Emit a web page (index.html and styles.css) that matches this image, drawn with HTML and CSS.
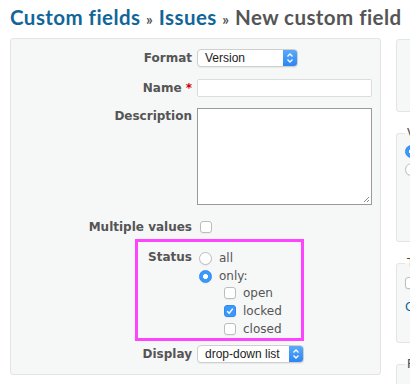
FILE: index.html
```html
<!DOCTYPE html>
<html lang="en">
<head>
  <meta charset="UTF-8">
  <title>New custom field</title>
  <link rel="stylesheet" href="styles.css">
</head>
<body>
  <h2 class="title"><a href="#">Custom fields</a> <span class="sep">&raquo;</span> <a href="#">Issues</a> <span class="sep">&raquo;</span> New custom field</h2>

  <div class="layout">
    <div class="box main-box">
      <div class="row row-format">
        <label class="row-label">Format</label>
        <div class="select select-format">
          <span class="select-value">Version</span>
          <span class="select-arrow">
            <svg width="8" height="12" viewBox="0 0 8 12"><path d="M1.5 4.5 L4 2 L6.5 4.5 M1.5 7.5 L4 10 L6.5 7.5" fill="none" stroke="#fff" stroke-width="1.3"/></svg>
          </span>
        </div>
      </div>

      <div class="row row-name">
        <label class="row-label">Name <span class="required">*</span></label>
        <input class="text-input" type="text">
      </div>

      <div class="row row-desc">
        <label class="row-label">Description</label>
        <div class="textarea">
          <svg class="grip" width="8" height="8" viewBox="0 0 8 8"><path d="M7 2 L2 7 M7 5 L5 7" stroke="#888" stroke-width="1"/></svg>
        </div>
      </div>

      <div class="row row-multiple">
        <label class="row-label">Multiple values</label>
        <span class="cb cb-single"></span>
      </div>

      <div class="highlight">
        <div class="status-row">
          <label class="status-label">Status</label>
          <div class="status-options">
            <div class="opt"><span class="radio"></span>all</div>
            <div class="opt"><span class="radio radio-on"></span>only:</div>
            <div class="sub-opts">
              <div class="opt"><span class="cb"></span>open</div>
              <div class="opt"><span class="cb cb-on"><svg width="10" height="10" viewBox="0 0 10 10"><path d="M2.2 5.2 L4.2 7.2 L7.8 2.6" fill="none" stroke="#fff" stroke-width="1.5"/></svg></span>locked</div>
              <div class="opt"><span class="cb"></span>closed</div>
            </div>
          </div>
        </div>
      </div>

      <div class="row row-display">
        <label class="row-label">Display</label>
        <div class="select select-display">
          <span class="select-value">drop-down list</span>
          <span class="select-arrow">
            <svg width="8" height="12" viewBox="0 0 8 12"><path d="M1.5 4.5 L4 2 L6.5 4.5 M1.5 7.5 L4 10 L6.5 7.5" fill="none" stroke="#fff" stroke-width="1.3"/></svg>
          </span>
        </div>
      </div>
    </div>

    <div class="sidebar">
      <div class="box side-box"></div>

      <fieldset class="side-fieldset fs-visible">
        <legend>Visible</legend>
        <div class="opt"><span class="radio radio-on"></span>to any users</div>
        <div class="opt"><span class="radio"></span>to these roles only:</div>
      </fieldset>

      <fieldset class="side-fieldset fs-trackers">
        <legend>Trackers</legend>
        <div class="opt"><span class="cb"></span>Bug</div>
        <p class="check-links"><a href="#">Check all</a> | <a href="#">Uncheck all</a></p>
      </fieldset>

      <fieldset class="side-fieldset fs-projects">
        <legend>For all projects</legend>
      </fieldset>
    </div>
  </div>
</body>
</html>
```

FILE: styles.css
```css
:root {
  --text: #555;
  --link: #169;
  --box-bg: #f6f7f7;
  --box-border: #e4e4e4;
  --blue: #3b99fc;
  --pink: #ff44ff;
}

* {
  box-sizing: border-box;
}

body {
  margin: 0;
  background: #fff;
  color: var(--text);
  font-family: "DejaVu Sans", Verdana, sans-serif;
  font-size: 12px;
  overflow: hidden;
}

a {
  color: var(--link);
  text-decoration: none;
}

.title {
  height: 31px;
  margin: 0;
  padding: 3px 0 0 10px;
  font-family: Lato, "Open Sans", sans-serif;
  font-size: 20.5px;
  font-weight: 700;
  letter-spacing: 0.45px;
  line-height: 28px;
  color: var(--text);
  white-space: nowrap;
}

.title .sep {
  font-size: 15px;
  line-height: 1;
}

.layout {
  display: flex;
  gap: 15px;
  margin-top: 7px;
  padding-left: 10px;
}

.box {
  background: var(--box-bg);
  border: 1px solid var(--box-border);
  border-radius: 3px;
}

.main-box {
  flex: 0 0 371px;
  height: 337px;
  padding: 10px 0 0 0;
}

/* form rows */
.row {
  display: flex;
  align-items: center;
  min-height: 18px;
}

.row-label {
  flex: 0 0 181px;
  margin-right: 5px;
  text-align: right;
  font-weight: bold;
}

.required {
  color: #c00;
}

.row-name {
  margin-top: 12px;
}

.row-desc {
  margin-top: 11px;
  align-items: flex-start;
}

.row-desc .row-label {
  padding-top: 1px;
}

.row-multiple {
  margin-top: 13px;
}

.row-display {
  margin-top: 4px;
}

.select {
  display: flex;
  align-items: stretch;
  height: 18px;
  background: #fff;
  border: 1px solid #cfcfcf;
  border-radius: 4px;
  box-shadow: 0 1px 1px rgba(0, 0, 0, 0.06);
  font-family: "Liberation Sans", Arial, sans-serif;
  font-size: 12px;
  color: #222;
  overflow: hidden;
}

.select-format {
  width: 101px;
}

.select-display {
  width: 107px;
}

.select-value {
  flex: 1;
  padding-left: 7px;
  line-height: 16px;
}

.select-arrow {
  width: 14px;
  display: flex;
  align-items: center;
  justify-content: center;
  background: linear-gradient(#5aaaf9, #2c86f3);
}

.text-input {
  width: 175px;
  height: 18px;
  margin: 0;
  border: 1px solid #dcdcdc;
  border-radius: 2px;
  background: #fff;
}

.textarea {
  position: relative;
  width: 175px;
  height: 97px;
  background: #fff;
  border: 1px solid #9a9a9a;
}

.grip {
  position: absolute;
  right: 1px;
  bottom: 1px;
}

/* checkboxes and radios */
.cb {
  display: inline-flex;
  align-items: center;
  justify-content: center;
  width: 12px;
  height: 12px;
  background: #fff;
  border: 1px solid #bdbdbd;
  border-radius: 3px;
  box-shadow: 0 1px 1px rgba(0, 0, 0, 0.05);
}

.cb-single {
  margin-left: 3px;
  height: 12px;
}

.cb-on {
  background: var(--blue);
  border-color: #3089ee;
}

.radio {
  display: inline-block;
  width: 13px;
  height: 13px;
  background: #fff;
  border: 1px solid #bdbdbd;
  border-radius: 50%;
  box-shadow: 0 1px 1px rgba(0, 0, 0, 0.05);
}

.radio-on {
  background: radial-gradient(circle, #fff 0 2.2px, var(--blue) 2.8px);
  border-color: #3089ee;
}

/* highlighted status block */
.highlight {
  width: 169px;
  margin: 3px 0 0 124px;
  border: 3px solid var(--pink);
  padding: 7px 0 0 0;
  height: 102px;
}

.status-row {
  display: flex;
  align-items: flex-start;
}

.status-label {
  flex: 0 0 54px;
  margin-right: 5px;
  text-align: right;
  font-weight: bold;
  line-height: 16px;
}

.opt {
  display: flex;
  align-items: center;
  gap: 7px;
  height: 18px;
}

.status-options .opt .radio {
  margin-left: 2px;
}

.sub-opts {
  margin-top: -1.5px;
  padding-left: 27px;
}

/* sidebar */
.sidebar {
  flex: 0 0 230px;
}

.side-box {
  height: 73px;
  margin-top: 1px;
}

.side-fieldset {
  margin: 0;
  padding: 0 8px 0 8px;
  background: var(--box-bg);
  border: 1px solid var(--box-border);
  border-radius: 3px;
}

.side-fieldset legend {
  padding: 0 2px;
  color: #484848;
}

.fs-visible {
  margin-top: 14px;
  height: 116px;
  padding-top: 2px;
}

.fs-trackers {
  margin-top: 14px;
  height: 87px;
  padding-top: 4px;
}

.fs-trackers .check-links {
  margin: 8px 0 0 0;
}

.fs-projects {
  margin-top: 14px;
  height: 40px;
}
```
